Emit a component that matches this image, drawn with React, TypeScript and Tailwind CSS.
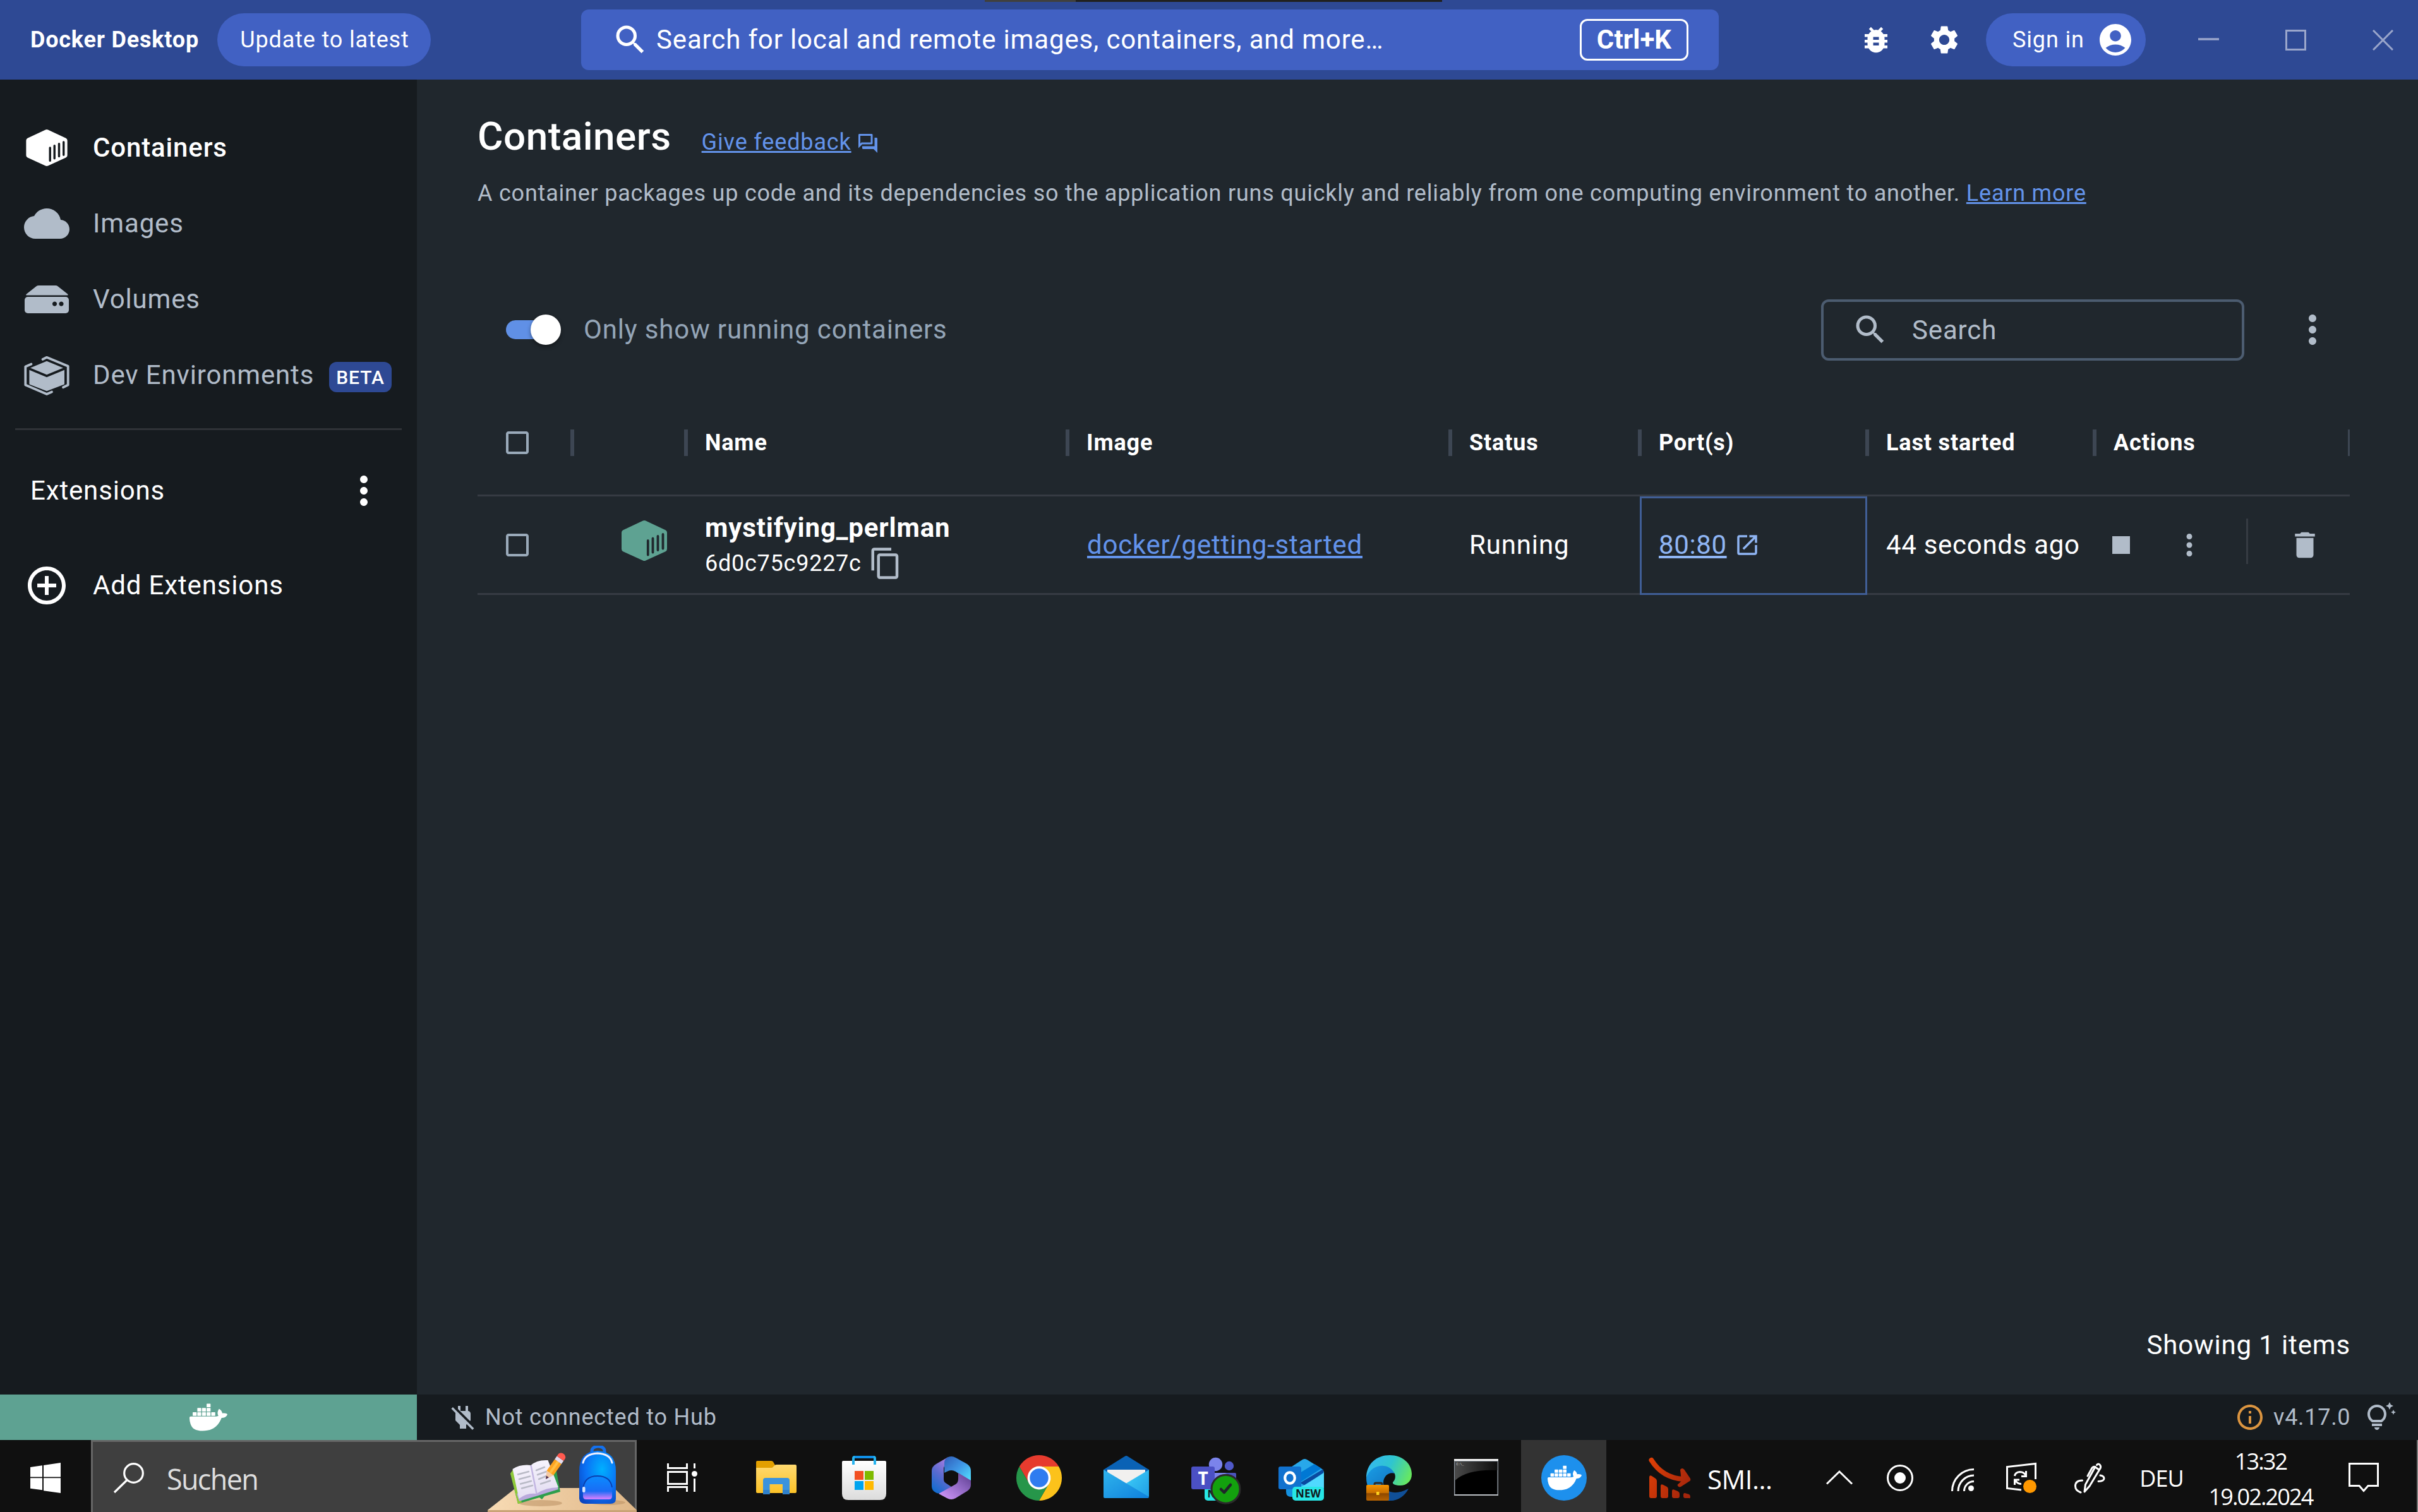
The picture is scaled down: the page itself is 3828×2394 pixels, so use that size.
import React from "react";
import {
  MdSearch, MdBugReport, MdSettings, MdMoreVert, MdStop, MdDelete, MdContentCopy,
  MdCheckBoxOutlineBlank, MdOpenInNew, MdOutlineQuestionAnswer, MdAddCircleOutline,
  MdInfoOutline, MdOutlineTipsAndUpdates, MdCloud, MdPowerOff,
} from "react-icons/md";
import { SiDocker } from "react-icons/si";

/* ---------- Docker glyphs ---------- */

function ContainerIcon({ className, bars }: { className: string; bars: string }) {
  return (
    <svg viewBox="0 0 72 64" className={className} fill="currentColor">
      <path d="M33.8.6a5 5 0 0 1 4.4 0l31.3 14.6A4.5 4.5 0 0 1 72 19.200v26a4.500 4.500 0 0 1-2.500 4L38.200 63.400a5 5 0 0 1-4.400 0L2.500 49.200a4.500 4.500 0 0 1-2.500-4v-26a4.500 4.500 0 0 1 2.500-4z" />
      <g stroke={bars} strokeWidth="3.8" strokeLinecap="round">
        <path d="M41.800 32v22.500M49.500 28.500v22M57.500 25v22M65.500 22v22.500" />
      </g>
    </svg>
  );
}

function VolumesIcon() {
  return (
    <svg viewBox="0 0 70 44" className="w-[70px] h-[44px]" fill="currentColor">
      <path d="M22.500 0h26.500q2 0 3.500 1.200L68 13.500q1.500 2-.5 2H3.500q-2.500 0-.5-2L18.500 1.200Q20 0 22.500 0z" />
      <path fillRule="evenodd" d="M5 18h60a5 5 0 0 1 5 5v16a5 5 0 0 1-5 5H5a5 5 0 0 1-5-5V23a5 5 0 0 1 5-5zm42.500 7.500a3.600 3.600 0 1 0 .01 0zm10.500 0a3.600 3.600 0 1 0 .01 0z" />
    </svg>
  );
}

function DevEnvIcon() {
  return (
    <svg viewBox="0 0 72 64" className="w-[72px] h-[64px] mt-[2px]" fill="currentColor">
      <path d="M36 8.700 62 19.400 36 30.200 10 19.400z" />
      <path d="M8.400 22.800 36 34.300l28-11.500v22.600L36 56.200 8.400 45.400z" />
      <g fill="none" stroke="currentColor" strokeWidth="3.800" strokeLinecap="round" strokeLinejoin="round">
        <path d="M29.500 6 36 2.800l33.700 14V46.500L62 50.300" />
        <path d="M11.500 13.500 2.300 17.500v29L36 61l8-3.500" />
      </g>
    </svg>
  );
}

function AccountIcon() {
  return (
    <svg viewBox="0 0 24 24" className="w-[60px] h-[60px]" fill="currentColor">
      <path d="M12 2C6.480 2 2 6.480 2 12s4.480 10 10 10 10-4.480 10-10S17.520 2 12 2zm0 4c1.930 0 3.500 1.570 3.500 3.500S13.930 13 12 13s-3.500-1.570-3.500-3.500S10.070 6 12 6zm0 14c-2.030 0-4.430-.82-6.140-2.880a9.947 9.947 0 0 1 12.280 0C16.430 19.180 14.030 20 12 20z" />
    </svg>
  );
}

/* ---------- Title bar ---------- */

function TitleBar() {
  return (
    <header className="relative flex h-[126px] shrink-0 items-center bg-[#2e4994] text-white">
      <div className="absolute left-[1559px] top-0 flex h-[3px] w-[724px] bg-[#21211f]">
        <div className="w-[144px] bg-[#40403e]" />
      </div>
      <div className="w-[344px] pl-[48px] text-[36px] font-bold whitespace-nowrap tracking-[0.8px]">Docker Desktop</div>
      <button className="flex h-[84px] w-[338px] items-center justify-center rounded-full bg-[#4161c3] pl-[2px] text-[36px]">Update to latest</button>
      <div className="ml-[238px] flex h-[96px] w-[1801px] items-center rounded-[12px] bg-[#4161c3] pl-[48px] pr-[48px]">
        <MdSearch className="h-[60px] w-[60px]" />
        <span className="ml-[11px] pb-[2px] text-[42px]">Search for local and remote images, containers, and more…</span>
        <span className="ml-auto flex h-[66px] w-[172px] items-center justify-center rounded-[12px] border-[3px] border-white pb-[2px] text-[42px] font-bold tracking-[0.1px]">Ctrl+K</span>
      </div>
      <MdBugReport className="ml-[222px] h-[54px] w-[54px]" />
      <MdSettings className="ml-[54px] h-[54px] w-[54px]" />
      <button className="ml-[39px] flex h-[84px] w-[253px] items-center rounded-full bg-[#4161c3] pl-[42px] pr-[18px] text-[36px]">
        <span>Sign in</span>
        <span className="ml-auto"><AccountIcon /></span>
      </button>
      <div className="ml-[83px] flex gap-[105px] text-[#9aa6cb]">
        <svg viewBox="0 0 33 33" className="h-[33px] w-[33px]"><path d="M0 15h33" stroke="currentColor" strokeWidth="3.500" /></svg>
        <svg viewBox="0 0 33 33" className="h-[33px] w-[33px]"><path d="M1.500 1.500h30v30h-30z" fill="none" stroke="currentColor" strokeWidth="3" /></svg>
        <svg viewBox="0 0 33 33" className="h-[33px] w-[33px]"><path d="M1 1l31 31M32 1 1 32" stroke="currentColor" strokeWidth="3" /></svg>
      </div>
    </header>
  );
}

/* ---------- Sidebar ---------- */

function NavItem({ icon, label, active, badge }: { icon: React.ReactNode; label: string; active?: boolean; badge?: string }) {
  return (
    <div className={active ? "flex h-[120px] items-center pl-[38px] font-medium text-white" : "flex h-[120px] items-center pl-[38px] text-[#b1bcc9]"}>
      <span className="flex w-[72px] justify-center">{icon}</span>
      <span className="ml-[37px] pb-[2px] text-[42px]">{label}</span>
      {badge && (
        <span className="ml-auto mr-[40px] mt-[6px] flex h-[48px] w-[99px] items-center justify-center rounded-[12px] bg-[#2e4994] text-[30px] font-medium text-white">{badge}</span>
      )}
    </div>
  );
}

function Sidebar() {
  return (
    <aside className="flex w-[660px] shrink-0 flex-col bg-[#161b1f] pt-[48px]">
      <NavItem active label="Containers" icon={<ContainerIcon bars="#161b1f" className="h-[58px] w-[66px]" />} />
      <NavItem label="Images" icon={<MdCloud className="h-[72px] w-[72px]" />} />
      <NavItem label="Volumes" icon={<VolumesIcon />} />
      <NavItem label="Dev Environments" icon={<DevEnvIcon />} badge="BETA" />
      <div className="mx-[24px] mt-[24px] h-[3px] bg-[#2f3237]" />
      <div className="mt-[48px] flex h-[96px] items-center justify-between pl-[48px] pr-[48px] text-white">
        <span className="pb-[2px] text-[42px]">Extensions</span>
        <MdMoreVert className="h-[72px] w-[72px]" />
      </div>
      <div className="mt-[42px] flex h-[120px] items-center pl-[38px] text-white">
        <MdAddCircleOutline className="h-[72px] w-[72px]" />
        <span className="ml-[37px] pb-[2px] text-[42px]">Add Extensions</span>
      </div>
    </aside>
  );
}

/* ---------- Containers table ---------- */

const columns = ["", "", "Name", "Image", "Status", "Port(s)", "Last started", "Actions"];
const gridCols = "grid grid-cols-[150px_180px_604px_606px_300px_360px_360px_404px] border-b-[3px] border-[#363b43]";

function ContainersTable() {
  return (
    <div className="mt-[49px] w-[2964px] text-white">
      <div className={gridCols + " h-[167px]"}>
        {columns.map((title, i) => (
          <div key={i} className="relative flex items-center pl-[30px] text-[36px] font-bold">
            {i === 0 ? <MdCheckBoxOutlineBlank className="ml-[9px] h-[48px] w-[48px] text-[#9aaaba]" /> : title}
            <i className={i === columns.length - 1 ? "absolute right-0 top-[61px] h-[42px] w-[3px] bg-[#3d4653]" : "absolute -right-[3px] top-[61px] h-[42px] w-[6px] bg-[#3d4653]"} />
          </div>
        ))}
      </div>
      <div className={gridCols + " h-[156px] text-[42px]"}>
        <div className="flex items-center pl-[39px]">
          <MdCheckBoxOutlineBlank className="h-[48px] w-[48px] text-[#9aaaba]" />
        </div>
        <div className="flex items-center pl-[78px] pb-[13px]">
          <ContainerIcon bars="#20272d" className="h-[64px] w-[72px] text-[#5ea292]" />
        </div>
        <div className="flex flex-col justify-center pl-[30px] pt-[2px]">
          <span className="font-bold leading-[56px]">mystifying_perlman</span>
          <span className="flex h-[56px] items-center text-[36px] tracking-[0.75px]">
            6d0c75c9227c
            <MdContentCopy className="ml-[11px] mt-[1px] h-[54px] w-[54px] text-[#b1bcc9]" />
          </span>
        </div>
        <div className="flex items-center pl-[31px]">
          <a className="text-[#6393ea] underline tracking-[0.75px]">docker/getting-started</a>
        </div>
        <div className="flex items-center pl-[30px]">Running</div>
        <div className="relative flex items-center pl-[30px] text-[#8fb5f3]">
          <i className="absolute -bottom-[3px] left-0 right-0 top-0 border-[3px] border-[#405e96]" />
          <a className="underline tracking-[0.6px]">80:80</a>
          <MdOpenInNew className="ml-[11px] h-[42px] w-[42px]" />
        </div>
        <div className="flex items-center whitespace-nowrap pl-[30px] tracking-[0.7px]">44 seconds ago</div>
        <div className="flex items-center pl-[14px] text-[#b1bcc9]">
          <MdStop className="h-[56px] w-[56px]" />
          <MdMoreVert className="ml-[53px] h-[54px] w-[54px]" />
          <i className="mb-[11px] ml-[63px] h-[72px] w-[3px] bg-[#363b43]" />
          <MdDelete className="ml-[63px] h-[54px] w-[54px]" />
        </div>
      </div>
    </div>
  );
}

function Main() {
  return (
    <main className="flex flex-1 flex-col bg-[#20272d] pl-[96px] pr-[108px] pt-[50px]">
      <div className="flex h-[80px] items-baseline leading-[80px]">
        <h1 className="text-[62px] font-medium tracking-[0.5px] text-white">Containers</h1>
        <a className="ml-[48px] text-[36px] text-[#6393ea] underline">Give feedback</a>
        <MdOutlineQuestionAnswer className="ml-[8px] h-[36px] w-[36px] translate-y-[11px] self-center text-[#6393ea]" />
      </div>
      <p className="mt-[20px] whitespace-nowrap text-[36px] leading-[60px] tracking-[0.78px] text-[#b1bcc9]">
        A container packages up code and its dependencies so the application runs quickly and reliably from one computing environment to another.{" "}
        <a className="text-[#6393ea] underline">Learn more</a>
      </p>
      <div className="mt-[138px] flex h-[96px] items-center">
        <div className="relative ml-[45px] h-[48px] w-[87px]">
          <div className="mt-[9px] h-[30px] w-[75px] rounded-full bg-[#6090e6]" />
          <div className="absolute right-0 top-0 h-[48px] w-[48px] rounded-full bg-white shadow-[0_3px_6px_rgba(0,0,0,0.4)]" />
        </div>
        <span className="ml-[36px] pb-[1px] text-[42px] text-[#94a5b7]">Only show running containers</span>
        <div className="ml-auto flex h-[97px] w-[670px] items-center rounded-[12px] border-[4px] border-[#4c5c70] pl-[44px] text-[#b1bcc9]">
          <MdSearch className="h-[60px] w-[60px]" />
          <span className="ml-[36px] text-[42px]">Search</span>
        </div>
        <MdMoreVert className="ml-[72px] mr-[23px] h-[72px] w-[72px] text-[#b1bcc9]" />
      </div>
      <ContainersTable />
      <div className="-mr-[1px] mb-[53px] mt-auto text-right text-[42px] leading-[50px] text-white">Showing 1 items</div>
    </main>
  );
}

function StatusBar() {
  return (
    <footer className="flex h-[72px] shrink-0 items-center bg-[#161b1f] text-[36px] text-[#b1bcc9]">
      <div className="flex h-full w-[660px] items-center justify-center bg-[#5ea292]">
        <SiDocker className="h-[60px] w-[60px] text-white" />
      </div>
      <MdPowerOff className="ml-[49px] h-[48px] w-[48px]" />
      <span className="ml-[11px] tracking-[0.8px]">Not connected to Hub</span>
      <MdInfoOutline className="ml-auto h-[48px] w-[48px] text-[#dc9540]" />
      <span className="ml-[13px] w-[122px] whitespace-nowrap tracking-[0.7px]">v4.17.0</span>
      <MdOutlineTipsAndUpdates className="ml-[24px] mr-[35px] h-[48px] w-[48px]" />
    </footer>
  );
}

/* ---------- Taskbar icons ---------- */

const appIcon = "h-[72px] w-[72px] overflow-visible";

function DeskIllustration() {
  return (
    <svg viewBox="0 0 236 105" className="absolute bottom-0 right-0 h-[105px] w-[236px]">
      <defs>
        <linearGradient id="desk" x1="0" x2="1"><stop offset="0" stopColor="#f8dbb4" /><stop offset="1" stopColor="#dfb788" /></linearGradient>
        <radialGradient id="bag" cx=".62" cy=".35" r=".8"><stop offset="0" stopColor="#00b0ff" /><stop offset=".55" stopColor="#0a72f5" /><stop offset="1" stopColor="#0a44c0" /></radialGradient>
        <linearGradient id="pocket" x1="0" y1="0" x2="0" y2="1"><stop offset="0" stopColor="#0a8cff" /><stop offset=".65" stopColor="#1a6cf5" /><stop offset="1" stopColor="#e080ff" /></linearGradient>
        <linearGradient id="page" x1="0" y1="0" x2="0" y2="1"><stop offset="0" stopColor="#f7f4fd" /><stop offset="1" stopColor="#e4def2" /></linearGradient>
      </defs>
      <path d="M44.500 67H200l36 35H0z" fill="url(#desk)" />
      <path d="M0 102h236v3H0z" fill="#c9a376" />
      <ellipse cx="84" cy="91" rx="34" ry="5" fill="#b98f63" opacity=".55" />
      <ellipse cx="190" cy="90" rx="28" ry="4" fill="#b98f63" opacity=".55" />
      <path d="M36 44 48 92l34-10 4 3 4-5 25-7-7-38-60 0z" fill="#2e9e4c" />
      <path d="M36 44l12 48 6-2-14-52z" fill="#8fc93a" />
      <path d="M46 76 50 88l30-9 32-10-2-6z" fill="#b9a9dc" />
      <path d="M39.500 37Q52 29 68.500 31l9 45Q62 74 49.500 84z" fill="url(#page)" />
      <path d="M68.500 31Q78 22 95.500 23L112 66Q92 66 77.500 76z" fill="url(#page)" />
      <path d="M68.500 31l9 45" stroke="#c3b6e2" strokeWidth="2.500" />
      <g stroke="#b9bac6" strokeWidth="2.500" strokeLinecap="round">
        <path d="M48 45.500l17-4.500M50 53l17-4.500M52 60.500l17-4.500M54 67.500l17-4.500M77 39l13-5M79 46l14-5M81 53l12-5M84 60.500l15-5" />
      </g>
      <g transform="translate(92 53) rotate(35)">
        <path d="M0 0l-6.500-12h13z" fill="#f4c9a4" /><path d="M0 0l-2.500-5h5z" fill="#4a2848" />
        <path d="M-6.500-34h13v22h-13z" fill="#ffa41f" /><path d="M-2-34h4v22h-4z" fill="#ffbf45" />
        <path d="M-6.500-40h13v6h-13z" fill="#e4dcee" /><path d="M-6.500-40v-4a6.500 5 0 0 1 13 0v4z" fill="#ff5a4f" />
      </g>
      <path d="M165 12V8a10 7 0 0 1 20 0v4" fill="none" stroke="#1470ec" strokeWidth="5" />
      <path d="M145 40Q145 9 174 8q29 1 29 32v44q0 8-9 8h-39q-9 0-10-8z" fill="url(#bag)" />
      <path d="M151 27q3-14 23-15 20 1 23 15" fill="none" stroke="#eef0ff" strokeWidth="3" strokeLinecap="round" />
      <path d="M151 70q1-22 23-22t23 22v10q0 5-5 5h-36q-5 0-5-5z" fill="url(#pocket)" />
      <path d="M151 70q1-22 23-22 20 0 23 18" fill="none" stroke="#0a3fae" strokeWidth="1.800" />
      <rect x="150" y="65" width="4.500" height="9" rx="2" fill="#dbe6ff" />
    </svg>
  );
}

function FolderIcon() {
  return (
    <svg viewBox="0 0 72 72" className={appIcon}>
      <defs><linearGradient id="fo" x1="0" y1="0" x2="0" y2="1"><stop offset="0" stopColor="#ffd970" /><stop offset="1" stopColor="#fcc227" /></linearGradient></defs>
      <path d="M6 9h22q2 0 3 1.500l4 7-4 5.500H4V11q0-2 2-2z" fill="#e3a000" />
      <path d="M4 20h24q2 0 3-1.500l2-2q1-1.500 3-1.500h30q2 0 2 2v41q0 2-2 2H6q-2 0-2-2z" fill="url(#fo)" />
      <path d="M15 62V40q0-4 4-4h34q4 0 4 4v22H46V46H25.500v16z" fill="#3b93dd" />
      <path d="M15 62V55h10.500v7zM46 62V55h11v7z" fill="#2f80cb" />
    </svg>
  );
}

function StoreIcon() {
  return (
    <svg viewBox="0 0 72 72" className={appIcon}>
      <defs><linearGradient id="st" x1="0" y1="0" x2="0" y2="1"><stop offset="0" stopColor="#fff" /><stop offset="1" stopColor="#dcdcdc" /></linearGradient></defs>
      <path d="M3 9h66q2 0 2 2v50q0 10-10 10H11Q1 71 1 61V11q0-2 2-2z" fill="url(#st)" />
      <path d="M19 15V5q0-2 2-2h30q2 0 2 2v10" fill="none" stroke="#26b3ee" strokeWidth="4" />
      <path d="M21 3h30" stroke="#1090e8" strokeWidth="4" />
      <path d="M21 25h14v14H21z" fill="#f25022" /><path d="M37 25h14v14H37z" fill="#7fba00" />
      <path d="M21 41h14v14H21z" fill="#00a4ef" /><path d="M37 41h14v14H37z" fill="#ffb900" />
    </svg>
  );
}

function M365Icon() {
  return (
    <svg viewBox="0 0 72 72" className={appIcon}>
      <defs>
        <linearGradient id="m1" x1=".7" y1="0" x2=".2" y2="1"><stop offset="0" stopColor="#ae7fe2" /><stop offset=".5" stopColor="#5b6bd0" /><stop offset="1" stopColor="#0f6ccf" /></linearGradient>
        <linearGradient id="m2" x1="0" y1="0" x2="1" y2="1"><stop offset="0" stopColor="#2f5cb8" /><stop offset=".5" stopColor="#3f97e6" /><stop offset="1" stopColor="#55e5ff" /></linearGradient>
        <linearGradient id="m3" x1="0" y1="1" x2="1" y2="0"><stop offset="0" stopColor="#d79bff" /><stop offset=".6" stopColor="#8d65c0" /><stop offset="1" stopColor="#5a3b8c" /></linearGradient>
      </defs>
      <path d="M31 3 12 14q-7 4-7 11v24q0 7 6 10 5 3 11 0l14-9-9-6q-3-2-3-6V20z" fill="url(#m1)" />
      <path d="M25 28V12q0-5 4-8 7-4 14 0l18 10q6 4 6 11v17L43 26q-7-4-14 0z" fill="url(#m2)" />
      <path d="M47 28v10q0 5-4 8L16 61l13 7q7 4 14 0l18-11q6-4 6-10v-7z" fill="url(#m3)" />
    </svg>
  );
}

function ChromeIcon() {
  const sector = "M31.200-18A36 36 0 0 0-31.200-18L-15.600 9A18 18 0 0 1 0-18z";
  return (
    <svg viewBox="-36 -36 72 72" className={appIcon}>
      <path d={sector} fill="#e63b2e" />
      <path d={sector} fill="#fcc21b" transform="rotate(120)" />
      <path d={sector} fill="#26964a" transform="rotate(240)" />
      <circle r="18.400" fill="#fff" /><circle r="14.700" fill="#2f7cf0" />
    </svg>
  );
}

function MailIcon() {
  return (
    <svg viewBox="0 0 72 72" className={appIcon}>
      <defs>
        <linearGradient id="ma" x1="0" y1="0" x2="1" y2="1"><stop offset="0" stopColor="#2fb4ec" /><stop offset="1" stopColor="#0f80dc" /></linearGradient>
        <linearGradient id="mb" x1="0" y1="0" x2="1" y2="1"><stop offset="0" stopColor="#40d0f8" /><stop offset="1" stopColor="#1f9ee6" /></linearGradient>
      </defs>
      <path d="M33.500 2q2.500-2 5 0L72 23v12H0V23z" fill="#0a62b5" />
      <path d="M6 23h60v12L36 54 6 35z" fill="#f1f0ef" />
      <path d="M72 23 36 44.500 50 58l22 8z" fill="url(#mb)" />
      <path d="M0 23l36 21.500L72 66q0 2-2 2H2q-2 0-2-2z" fill="url(#ma)" />
    </svg>
  );
}

function TeamsIcon() {
  return (
    <svg viewBox="0 0 72 72" className={appIcon}>
      <circle cx="38.500" cy="14.500" r="10.700" fill="#7b83eb" />
      <circle cx="60" cy="17" r="7.200" fill="#5059c9" />
      <path d="M50 28h19q2 0 2 2v20H50z" fill="#4b53bc" />
      <path d="M22 28h30q5 0 5 5v28H22z" fill="#7b83eb" />
      <rect x="21" y="50" width="30" height="22" rx="5" fill="#27e6e6" />
      <text x="25.500" y="67" fontFamily="Open Sans" fontWeight="700" fontSize="16" letterSpacing="0" fill="#10191c">N</text>
      <rect y="18" width="37" height="36" rx="3" fill="#4b50c4" />
      <text x="18.500" y="46.500" textAnchor="middle" fontFamily="Open Sans" fontWeight="700" fontSize="28" letterSpacing="0" fill="#fff">T</text>
      <circle cx="54.500" cy="53.700" r="22.500" fill="#13a10e" stroke="#2b2b2b" strokeWidth="3" />
      <path d="M47 54l5 5 10-12" fill="none" stroke="#20262a" strokeWidth="4.500" strokeLinecap="round" strokeLinejoin="round" />
    </svg>
  );
}

function OutlookIcon() {
  return (
    <svg viewBox="0 0 72 72" className={appIcon}>
      <path d="M12 24 38 7q3.500-2 7 0l24 15q3 2 3 5v30H20q-8 0-8-8z" fill="#28a8ea" />
      <path d="M24 34 57 14l11 7-34 22z" fill="#0078d4" />
      <path d="M34 44 71 22v6L42 48z" fill="#0a4aa0" />
      <path d="M40 48l32-20v24H30z" fill="#50d9ff" />
      <path d="M12 50h20v16H20q-8 0-8-8z" fill="#1490df" />
      <rect y="18" width="36" height="36" rx="3" fill="#1172cf" />
      <ellipse cx="18" cy="36" rx="7.800" ry="8.600" fill="none" stroke="#fff" strokeWidth="4.200" />
      <rect x="22" y="50" width="50" height="22" rx="5" fill="#27e6e6" />
      <text x="47" y="67" textAnchor="middle" fontFamily="Open Sans" fontWeight="700" fontSize="17" letterSpacing="0" fill="#10191c">NEW</text>
    </svg>
  );
}

function EdgeIcon() {
  return (
    <svg viewBox="0 0 72 72" className={appIcon}>
      <defs>
        <linearGradient id="e1" x1="0" y1=".3" x2="1" y2=".6"><stop offset="0" stopColor="#35b8f0" /><stop offset=".5" stopColor="#2fc5cf" /><stop offset="1" stopColor="#68e85f" /></linearGradient>
        <linearGradient id="e2" x1="0" y1="0" x2="1" y2="1"><stop offset="0" stopColor="#1b9fe6" /><stop offset="1" stopColor="#0b5cad" /></linearGradient>
        <linearGradient id="bc" x1="0" y1="0" x2="0" y2="1"><stop offset="0" stopColor="#f79400" /><stop offset=".5" stopColor="#c97000" /><stop offset=".55" stopColor="#8e4800" /><stop offset="1" stopColor="#b86300" /></linearGradient>
      </defs>
      <path d="M0 36C2 22 12 16 23 16c13 0 20 6 22 13-9-3-18 4-18 15 0 14 16 22 38 10C59 66 49 72 36 72 15 72 0 56 0 36z" fill="url(#e2)" />
      <path d="M27 44c0 14 18 21 40 9-6 12-17 19-29 19-10-5-14-17-11-28z" fill="#104f97" />
      <path d="M0 36C0 13 17 0 37 0s35 13 35 30c0 12-9 18-18 18-7 0-13-2-12-5 5-5 5-12 1-17C33 11 7 14 0 36z" fill="url(#e1)" />
      <path d="M13 48v-2q0-2 2-2h8q2 0 2 2v2" fill="none" stroke="#2b2b2b" strokeWidth="3" />
      <rect y="47" width="36" height="25" rx="2" fill="url(#bc)" />
      <rect x="16" y="58" width="4.500" height="5" fill="#ffd21f" />
    </svg>
  );
}

function TerminalIcon() {
  return (
    <svg viewBox="0 0 72 72" className={appIcon}>
      <defs><linearGradient id="te" x1="0" y1="0" x2="1" y2="0"><stop offset="0" stopColor="#4a4a4a" /><stop offset="1" stopColor="#0d0d0d" /></linearGradient></defs>
      <rect x="1" y="6" width="70" height="58" fill="#8f979f" />
      <rect x="1" y="6" width="70" height="3" fill="#f4f4f4" />
      <rect x="1" y="62.500" width="70" height="1.500" fill="#c9cdd2" />
      <rect x="2.500" y="10" width="67" height="52" fill="#000" />
      <path d="M2.500 10h67v14Q22 22 2.500 40z" fill="url(#te)" />
      <text x="4.500" y="16" fontFamily="Liberation Mono" fontSize="5" letterSpacing="0" fill="#ddd">C:\_</text>
    </svg>
  );
}

function StocksIcon() {
  return (
    <svg viewBox="0 0 72 72" className="h-[72px] w-[72px]">
      <defs><linearGradient id="sk" gradientUnits="userSpaceOnUse" x1="0" y1="10" x2="70" y2="50"><stop offset="0" stopColor="#e04006" /><stop offset="1" stopColor="#a3250c" /></linearGradient></defs>
      <g fill="url(#sk)">
        <path d="M3 35q0-4 4-2l6 4q2 1.500 2 4v24q0 3-3 3H6q-3 0-3-3zM21 49q0-4 4-2l6 3q2 1.500 2 4v11q0 3-3 3h-6q-3 0-3-3zM39 57q0-4 4-2l5 2q3 1.500 3 4v4q0 3-3 3h-6q-3 0-3-3zM57 63q0-4 4-2.500l5 1.500q2 1 2 4t-2 2h-6q-3 0-3-3z" />
        <path d="M52 23q3-4 6.500 0L68 37q1 3-1 4L53 50q-4 1.500-5.500-3L54 41z" />
      </g>
      <path d="M6.500 8Q24 36 57 38" fill="none" stroke="url(#sk)" strokeWidth="8" strokeLinecap="round" />
    </svg>
  );
}

const apps = [FolderIcon, StoreIcon, M365Icon, ChromeIcon, MailIcon, TeamsIcon, OutlookIcon, EdgeIcon, TerminalIcon];
const tray = "h-[48px] w-[48px] shrink-0 overflow-visible";

function Taskbar() {
  return (
    <div className="relative flex h-[114px] shrink-0 items-center bg-[#101010] font-['Open_Sans',sans-serif] text-white">
      <div className="flex h-full w-[144px] items-center justify-center pt-[6px]">
        <svg viewBox="0 0 48 48" className="h-[48px] w-[48px]" fill="#fff">
          <path d="M0 7l19-2.800v18.300H0zM21 3.900 48 0v22.500H21zM0 24.300h19v18.900L0 40.700zM21 24.300h27V48l-27-3.700z" />
        </svg>
      </div>
      <div className="relative flex h-full w-[864px] items-center border-[3px] border-b-0 border-[#666] bg-[#3f3f3f] pl-[33px] pt-[3px]">
        <svg viewBox="0 0 48 48" className={tray} fill="none" stroke="#fff" strokeWidth="3.200">
          <circle cx="31.500" cy="16.500" r="14.800" /><path d="M21 27.500 1 47" />
        </svg>
        <span className="ml-[36px] pt-[3px] text-[45px] tracking-[-1.7px] text-[#dedede]">Suchen</span>
        <div className="absolute bottom-0 right-[-3px] h-[105px] w-[236px]"><DeskIllustration /></div>
      </div>
      <div className="flex h-full items-center pt-[6px]">
        <svg viewBox="0 0 48 48" className="ml-[48px] mr-[56px] h-[48px] w-[48px] shrink-0" fill="none" stroke="#fff" strokeWidth="3">
          <path d="M1.500 1v7.500h30V1M1.500 14.500h30v19h-30zM1.500 46v-7.500h30V46M43.500 1v8M43.500 25v21" />
          <circle cx="43.500" cy="17.500" r="4.500" fill="#fff" stroke="none" />
        </svg>
        {apps.map((Icon, i) => (
          <div key={i} className="flex w-[138.500px] shrink-0 justify-center"><Icon /></div>
        ))}
      </div>
      <div className="ml-[1.5px] flex h-full w-[135px] shrink-0 items-center justify-center bg-[#333] pt-[6px]">
        <div className="flex h-[72px] w-[72px] items-center justify-center rounded-full bg-[#1d90ed]">
          <SiDocker className="ml-[3px] h-[54px] w-[54px]" />
        </div>
      </div>
      <div className="flex h-full flex-1 items-center pl-[65px] pt-[6px]">
        <StocksIcon />
        <span className="ml-[23px] w-[185px] pt-[2px] text-[42px] tracking-[-0.5px]">SMI...</span>
        <svg viewBox="0 0 48 48" className={tray} fill="none" stroke="#fff" strokeWidth="3"><path d="M4 33.500 24 14l20 19.500" /></svg>
        <svg viewBox="0 0 48 48" className={tray + " ml-[48px]"}>
          <circle cx="24" cy="24" r="19.500" fill="none" stroke="#fff" strokeWidth="3" /><circle cx="24" cy="24" r="9" fill="#fff" />
        </svg>
        <svg viewBox="0 0 48 48" className={tray + " ml-[48px]"} fill="none" stroke="#fff" strokeWidth="3">
          <path d="M10.500 45A34.500 34.500 0 0 1 45 10.500M20 45a25 25 0 0 1 25-25M29.500 45A15.500 15.500 0 0 1 45 29.500" />
          <circle cx="40.500" cy="40.500" r="4.500" fill="#fff" stroke="none" />
        </svg>
        <svg viewBox="0 0 48 48" className={tray + " ml-[48px]"} fill="none" stroke="#fff" strokeWidth="3">
          <path d="M24 43 1.500 40.500V6.500L46.500 1.500V26" />
          <path d="M13.500 21q1-6 8-6.500 7 0 9.500 6M31.500 13v8.500H24M24 33.500q-7 0-9.500-6M13.500 35v-8H21" />
          <circle cx="37.500" cy="37.500" r="10.500" fill="#ff9800" stroke="none" />
        </svg>
        <svg viewBox="0 0 48 48" className={tray + " ml-[60px]"} fill="none" stroke="#fff" strokeWidth="3" strokeLinejoin="round" strokeLinecap="round">
          <path d="M35.500 3.500q2.500-3 5 0t-.5 7L24 37l-8 9 1.500-11.500L33 6.500" /><path d="M33 6.500q-4-1-6 3.500l-6 11M33 7l6 4" />
          <path d="M12.500 28Q1.500 28 1.500 37q0 7 8.500 10M41 20q6 1 6 5t-9 4.500" />
        </svg>
        <span className="ml-[48px] w-[84px] pt-[2px] text-center text-[36px] tracking-[-1px]">DEU</span>
        <div className="ml-[25px] w-[180px] pt-[3px] text-center text-[36px] leading-[56px] tracking-[-1.85px]">
          <div>13:32</div>
          <div>19.02.2024</div>
        </div>
        <svg viewBox="0 0 48 48" className={tray + " ml-[49px]"} fill="none" stroke="#fff" strokeWidth="3">
          <path d="M1.500 1.500h45v35H31L24 44.500 17 36.500H1.500z" />
        </svg>
      </div>
      <div className="absolute right-0 top-0 h-full w-[2px] bg-[#777]" />
    </div>
  );
}

export default function App() {
  return (
    <div className="flex h-[2394px] w-[3828px] flex-col overflow-hidden bg-[#20272d] font-[Roboto,sans-serif] leading-normal tracking-[0.85px]">
      <TitleBar />
      <div className="flex min-h-0 flex-1">
        <Sidebar />
        <Main />
      </div>
      <StatusBar />
      <Taskbar />
    </div>
  );
}
